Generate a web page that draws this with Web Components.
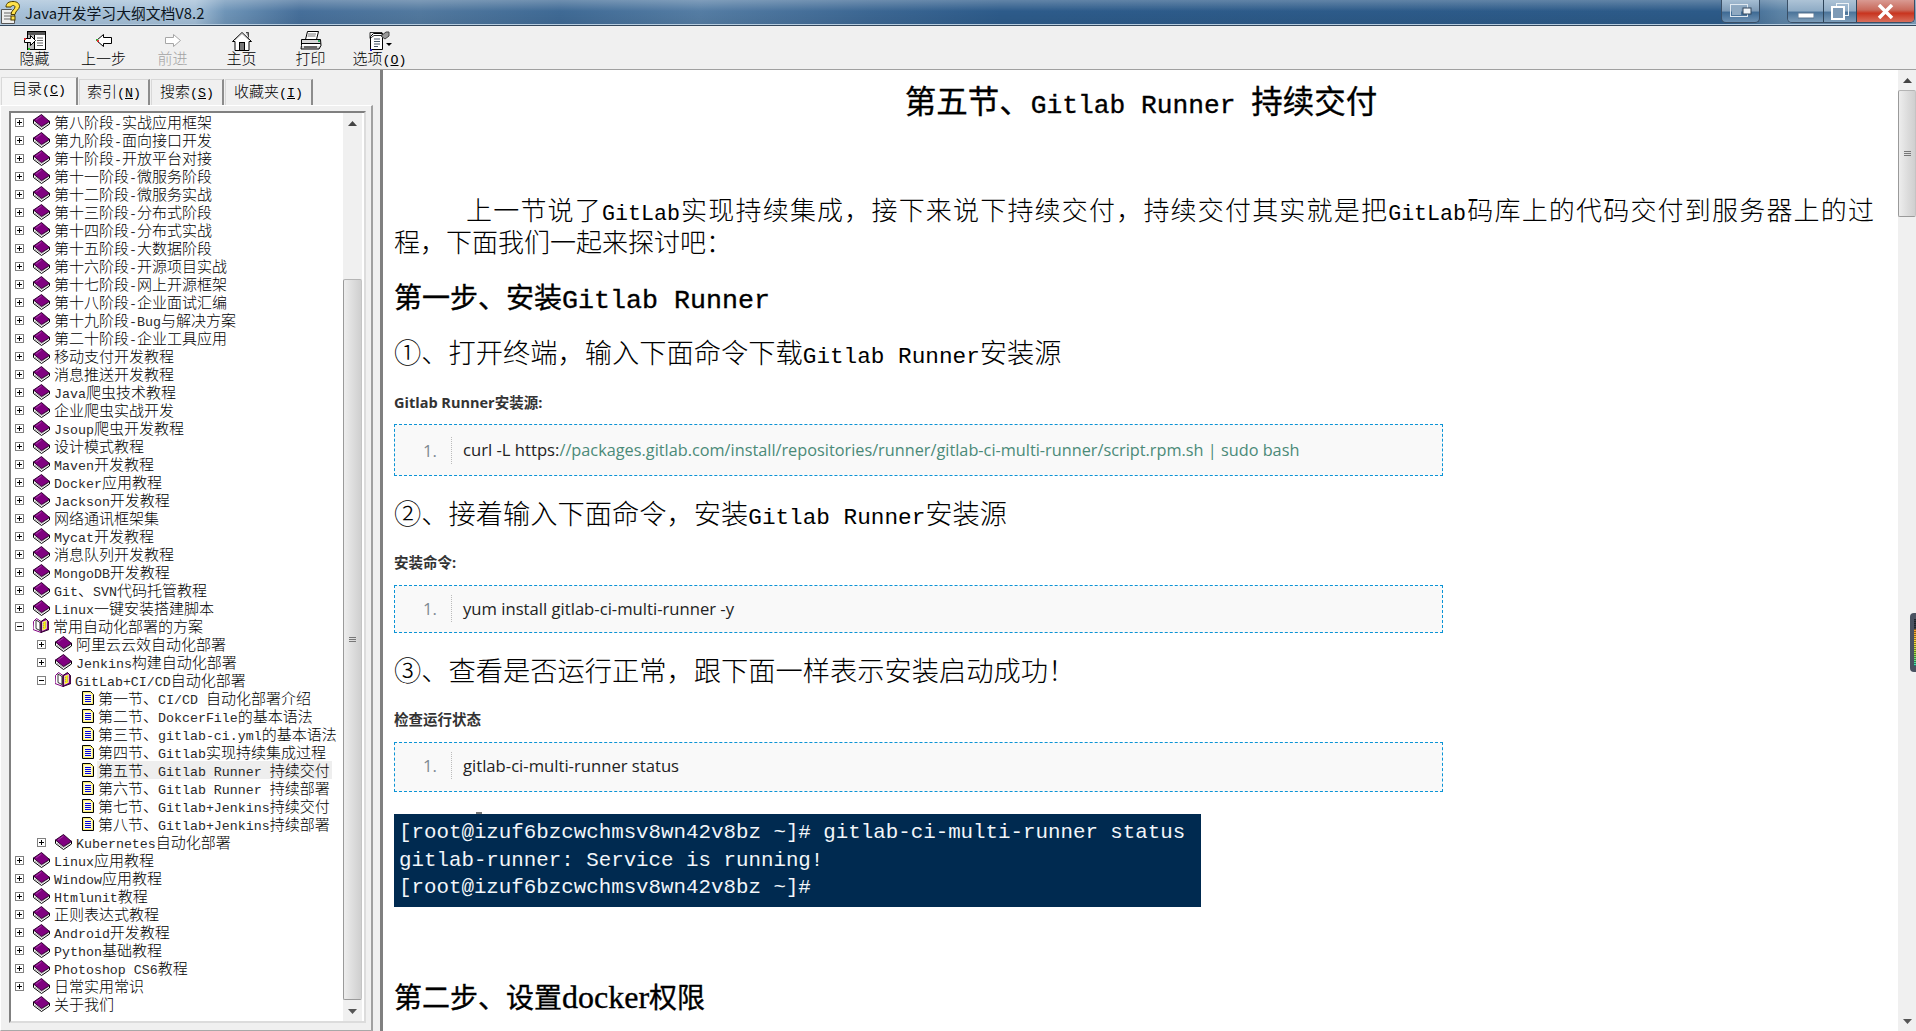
<!DOCTYPE html>
<html lang="zh">
<head>
<meta charset="utf-8">
<title>Java开发学习大纲文档V8.2</title>
<style>
  html, body { margin: 0; height: 100%; overflow: hidden; background: #f0f0f0; }
</style>
</head>
<body>
<help-window></help-window>
<script>
const CJK = '"Noto Sans CJK SC", sans-serif';

// latin runs get a mono font at half the CJK advance, like the bitmap font in the original
function esc(s) {
  return String(s).replace(/[&<>"]/g, m => ({ "&": "&amp;", "<": "&lt;", ">": "&gt;", '"': "&quot;" }[m]));
}
function mix(s) {
  return s.split(/([\x20-\x7e]+)/).map((part, i) => i % 2 ? `<span class="l">${esc(part)}</span>` : esc(part)).join("");
}
const MIX_CSS = `.l { font-family: "Liberation Mono", monospace; font-size: .833em; line-height: 0; }`;

const ICONS = {
  hide: `<svg width="22" height="20" viewBox="0 0 22 20"><rect x="3.500" y=".5" width="18" height="18" fill="#fff" stroke="#000"/><rect x="4" y="1" width="17" height="3" fill="#555"/><rect x="4" y="4" width="6" height="14" fill="#bdbdbd"/><path d="M10.500 4v14" stroke="#000"/><path d="M13 7h6M13 9.500h6M13 12h6M13 14.500h6" stroke="#666"/><path d="M.5 7.500h6v-3l5 5-5 5v-3h-6z" fill="#fff" stroke="#000"/><rect x="0" y="7" width="2" height="2" fill="#d33"/><rect x="4" y="17" width="2" height="2" fill="#2b2"/></svg>`,
  back: `<svg width="16" height="13" viewBox="0 0 16 13"><path d="M15.500 3.500h-8v-3l-7 6 7 6v-3h8z" fill="#fff" stroke="#000"/><rect x="0" y="5" width="2" height="2" fill="#3a3"/><rect x="1" y="6" width="2" height="2" fill="#d33"/></svg>`,
  forward: `<svg width="16" height="13" viewBox="0 0 16 13"><path d="M.5 3.500h8v-3l7 6-7 6v-3h-8z" fill="#fff" stroke="#a6a6a6"/></svg>`,
  home: `<svg width="20" height="20" viewBox="0 0 20 20"><path d="M14 1.500h2.500v5" fill="#888" stroke="#444"/><path d="M.5 10.500l9.500-9 9.500 9h-2.500v9h-14v-9z" fill="#fff" stroke="#000"/><path d="M3 9l7-6.500 7 6.500" fill="none" stroke="#999"/><rect x="7.500" y="11.500" width="5" height="8" fill="#777" stroke="#000"/></svg>`,
  print: `<svg width="22" height="19" viewBox="0 0 22 19"><path d="M7.500.5h11l-2 8h-11z" fill="#fff" stroke="#000"/><path d="M8 3h8M7.500 5h8" stroke="#777"/><path d="M1.500 8.500h19l.5 6-2 3.500h-18l.500-3.500z" fill="#d8d8d8" stroke="#000"/><path d="M1.500 12.500h19" stroke="#000"/><rect x="2" y="13" width="18" height="2" fill="#fff"/><rect x="4" y="15" width="13" height="2" fill="#666"/><rect x="18" y="9" width="2" height="2" fill="#3a6"/></svg>`,
  options: `<svg width="24" height="20" viewBox="0 0 24 20"><path d="M5.500 2.500h9v16h-12v-13z" fill="#fff" stroke="#000"/><path d="M2 1.500h12v3H6l-4 3z" fill="none" stroke="#000" opacity=".8"/><path d="M6 8h6M6 10.500h6M6 13h6M6 15.500h4" stroke="#456"/><path d="M13 5l5-4h3v4l-4 3z" fill="#999" stroke="#444"/><path d="M18 12h6l-3 3z" fill="#000"/><rect x="2" y="18" width="2" height="2" fill="#22c"/></svg>`,
  book: `<svg width="17" height="16" viewBox="0 0 17 16"><path d="M.5 6v3.500l8 6 8-5.500V7z" fill="#fff" stroke="#000"/><path d="M2 9l6.500 4.500 6.500-4.500" fill="none" stroke="#aaa"/><path d="M.5 6l8-5.500 8 7-8 5z" fill="#800080" stroke="#300030"/><path d="M3 6l5.500-4" stroke="#a838a8" fill="none"/></svg>`,
  open: `<svg width="16" height="16" viewBox="0 0 16 16"><path d="M.5 3.500l3-3 4.500 3v11l-8-3z" fill="#fff" stroke="#800080"/><path d="M15.500 3.500l-3-3-4.500 3v11l8-3z" fill="#800080" stroke="#2a002a"/><path d="M3 2l4 2.500v8l-4-2z" fill="#fff" stroke="#000" stroke-width=".8"/><path d="M9.500 4l4-1.500v8l-4 2z" fill="#fff200" stroke="#fff" stroke-width=".6"/><path d="M10.500 5v6M12.500 4.500v6" stroke="#999" stroke-dasharray="1 1"/></svg>`,
  doc: `<svg width="12" height="14" viewBox="0 0 12 14"><path d="M.5.5h8l3 3v10h-11z" fill="#fffbd0" stroke="#000"/><path d="M1.500 1.500h7v1h2v10h-9z" fill="none" stroke="#f0dc20" stroke-dasharray="1 1"/><path d="M3 4.500h6M3 6.500h6M3 8.500h6M3 10.500h6" stroke="#0000e0"/></svg>`,
  help: `<svg width="20" height="24" viewBox="0 0 20 24"><path d="M.5 8.500h10l3 3v11H.5z" fill="#eee" stroke="#555"/><path d="M3 12h7M3 15h7M3 18h7" stroke="#666"/><path d="M5 6c0-4 3-5.500 7-5.500s6.500 2 6.500 5-4 4-4.500 8h-4c0-4 4-5 4-7.500 0-2-3.500-2-4 0z" fill="#ffe24a" stroke="#4a3c00"/><rect x="10" y="15" width="4" height="4" fill="#ffe24a" stroke="#4a3c00"/></svg>`,
  grip: `<svg width="7" height="6" viewBox="0 0 7 6"><path d="M0 .5h7M0 2.500h7M0 4.500h7" stroke="#777"/></svg>`,
  up: `<svg width="9" height="5" viewBox="0 0 9 5"><path d="M4.500 0L9 5H0z" fill="#444"/></svg>`,
  down: `<svg width="9" height="5" viewBox="0 0 9 5"><path d="M0 0h9L4.500 5z" fill="#555"/></svg>`
};

class WinTitlebar extends HTMLElement {
  constructor() {
    super();
    this.attachShadow({ mode: "open" }).innerHTML = `
      <style>
        :host { display: flex; align-items: flex-start; height: 26px; box-sizing: border-box; position: relative;
          border-bottom: 1px solid #33475c;
          background:
            linear-gradient(180deg, rgba(255,255,255,.25), rgba(255,255,255,0) 45%, rgba(0,0,0,.06) 100%),
            linear-gradient(90deg, #a8c2d9 0, #a4bfd7 195px, #6f95b8 225px, #466f9a 300px, #52799f 420px, #3f6a95 560px, #557da4 700px, #3c6793 870px, #2d5b8a 1000px, #2c5a88 1720px, #5c83a6 1780px, #7fa0bd 1916px); }
        :host::after { content: ""; position: absolute; left: 0; right: 0; bottom: 0; height: 1px; background: #b7cde0; }
        .ic { margin: 1px 0 0 1px; flex: none; }
        .t { font: 14.800px/26px ${CJK}; color: #0c1520; margin-left: 4px; white-space: nowrap; }
        .snap { margin-left: auto; width: 39px; height: 23px; box-sizing: border-box; display: flex; align-items: center; justify-content: center;
          border: 1px solid #3a4f66; border-top: 0; border-radius: 0 0 5px 5px;
          background: linear-gradient(180deg, #a6bed3, #7d9ab6 50%, #3e6a94 55%, #6c90b2); }
        .ctl { display: flex; margin: 0 0 0 27px; height: 23px; box-sizing: border-box; border: 1px solid #3a4f66; border-top: 0; border-radius: 0 0 5px 5px; overflow: hidden; margin-right: 1px; }
        .ctl div { display: flex; align-items: center; justify-content: center; }
        .min, .max { background: linear-gradient(180deg, #adc3d6, #8eabc5 50%, #4a7399 55%, #7d9db9); border-right: 1px solid #2d4358; }
        .min { width: 35px; } .max { width: 32px; }
        .cls { width: 57px; background: linear-gradient(180deg, #d99a92, #c96a5c 45%, #c8341f 60%, #d86f5c); }
      </style>
      <span class="ic">${ICONS.help}</span>
      <span class="t">Java开发学习大纲文档V8.2</span>
      <div class="snap"><svg width="22" height="14" viewBox="0 0 22 14"><rect x=".5" y=".5" width="17" height="12" fill="none" stroke="#dfe8f0"/><rect x="2" y="2" width="9" height="9" fill="#8fa9c1"/><rect x="13" y="4" width="8" height="6" fill="#eef3f7" stroke="#33475c"/></svg></div>
      <div class="ctl">
        <div class="min"><svg width="16" height="16" viewBox="0 0 16 16"><rect x="0" y="10" width="16" height="5" fill="#fff" stroke="#5a7590"/></svg></div>
        <div class="max"><svg width="18" height="17" viewBox="0 0 18 17"><rect x="5.500" y=".5" width="12" height="12" fill="none" stroke="#eef3f7"/><rect x="1" y="4" width="12" height="12" fill="#7d9ab6" stroke="#fff" stroke-width="2"/></svg></div>
        <div class="cls"><svg width="17" height="15" viewBox="0 0 17 15"><path d="M2 1l13 13M15 1L2 14" stroke="#fff" stroke-width="3.500"/></svg></div>
      </div>`;
  }
}
customElements.define("win-titlebar", WinTitlebar);

class ToolButton extends HTMLElement {
  connectedCallback() {
    if (this.shadowRoot) return;
    const key = this.getAttribute("key");
    this.attachShadow({ mode: "open" }).innerHTML = `
      <style>
        :host { display: flex; flex-direction: column; align-items: center; width: 69px; color: ${this.hasAttribute("disabled") ? "#a3a3a3" : "#000"}; }
        .i { height: 21px; display: flex; align-items: center; justify-content: center; margin-top: 3px; }
        .n { font: 300 15px/18px ${CJK}; white-space: nowrap; margin-top: -2px; }
        ${MIX_CSS}
        .l { font-size: 13.300px; }
      </style>
      <div class="i">${ICONS[this.getAttribute("icon")]}</div>
      <div class="n">${esc(this.getAttribute("label"))}${key ? `<span class="l">(<u>${key}</u>)</span>` : ""}</div>`;
  }
}
customElements.define("tool-button", ToolButton);

class HelpToolbar extends HTMLElement {
  constructor() {
    super();
    this.attachShadow({ mode: "open" }).innerHTML = `
      <style>
        :host { display: flex; height: 44px; box-sizing: border-box; padding-top: 1px; background: #f0f0f0; border-bottom: 1px solid #a0a0a0; }
      </style>
      <tool-button icon="hide" label="隐藏"></tool-button>
      <tool-button icon="back" label="上一步"></tool-button>
      <tool-button icon="forward" label="前进" disabled></tool-button>
      <tool-button icon="home" label="主页"></tool-button>
      <tool-button icon="print" label="打印"></tool-button>
      <tool-button icon="options" label="选项" key="O"></tool-button>`;
  }
}
customElements.define("help-toolbar", HelpToolbar);

class ScrollBar extends HTMLElement {
  connectedCallback() {
    if (this.shadowRoot) return;
    const before = this.getAttribute("before"), size = this.getAttribute("size");
    this.attachShadow({ mode: "open" }).innerHTML = `
      <style>
        :host { display: flex; flex-direction: column; flex: none; background: #f0f0f0; }
        .a { flex: none; height: 20px; display: flex; align-items: center; justify-content: center; }
        .track { flex: 1; min-height: 0; padding-top: ${before}px; }
        .thumb { height: ${size}px; box-sizing: border-box; display: flex; align-items: center; justify-content: center;
          background: linear-gradient(90deg, #ededed, #dcdcdc 55%, #cfcfcf); border: 1px solid #9a9a9a; border-top-color: #b4b4b4; border-right-color: #c4c4c4; border-radius: 2px; }
      </style>
      <div class="a">${ICONS.up}</div>
      <div class="track"><div class="thumb">${ICONS.grip}</div></div>
      <div class="a">${ICONS.down}</div>`;
  }
}
customElements.define("scroll-bar", ScrollBar);

class TocTabs extends HTMLElement {
  constructor() {
    super();
    const tabs = [["目录", "C", 77], ["索引", "N", 71], ["搜索", "S", 73], ["收藏夹", "I", 88]];
    this.attachShadow({ mode: "open" }).innerHTML = `
      <style>
        :host { display: flex; align-items: flex-end; height: 35px; padding-left: 1px; box-sizing: border-box; gap: 1px; }
        .tab { box-sizing: border-box; height: 26px; font: 300 15px/21px ${CJK}; text-align: center; white-space: nowrap; color: #000;
          border: 1px solid #d8d8d8; border-bottom: 0; border-right: 2px solid #8c8c8c; background: #f0f0f0; }
        .tab.on { height: 28px; line-height: 20px; background: #f5f5f5; }
        ${MIX_CSS}
        .l { font-size: 13.300px; }
      </style>
      ${tabs.map(([n, k, w], i) => `<div class="tab${i ? "" : " on"}" style="width:${w}px">${n}<span class="l">(<u>${k}</u>)</span></div>`).join("")}`;
  }
}
customElements.define("toc-tabs", TocTabs);

class TocRow extends HTMLElement {
  connectedCallback() {
    if (this.shadowRoot) return;
    const level = +this.getAttribute("level") || 0;
    const kind = this.getAttribute("kind") || "book";
    const exp = this.getAttribute("exp") || "";
    const box = exp ? `<svg width="9" height="9" viewBox="0 0 9 9"><rect x=".5" y=".5" width="8" height="8" fill="#fff" stroke="#808080"/><path d="M2 4.500h5${exp === "+" ? "M4.500 2v5" : ""}" stroke="#000"/></svg>` : "";
    this.attachShadow({ mode: "open" }).innerHTML = `
      <style>
        :host { display: flex; align-items: center; height: 18px; white-space: pre; padding-left: ${level === 2 ? 71 : 4 + level * 22}px; }
        .x { width: 9px; height: 9px; margin-right: 9px; flex: none; display: flex; }
        .ic { flex: none; display: flex; margin-right: 3px; }
        .tx { font: 300 15px/18px ${CJK}; color: #000; padding: 0 2px 0 1px; }
        :host([sel]) .tx { background: #eeeeee; }
        ${MIX_CSS}
        .l { color: #2a2a2a; font-size: 13.300px; }
      </style>
      ${level === 2 ? "" : `<span class="x">${box}</span>`}
      <span class="ic">${ICONS[kind]}</span>
      <span class="tx">${mix(this.getAttribute("text"))}</span>`;
  }
}
customElements.define("toc-row", TocRow);

const TOC = [
  ..."第八阶段-实战应用框架|第九阶段-面向接口开发|第十阶段-开放平台对接|第十一阶段-微服务阶段|第十二阶段-微服务实战|第十三阶段-分布式阶段|第十四阶段-分布式实战|第十五阶段-大数据阶段|第十六阶段-开源项目实战|第十七阶段-网上开源框架|第十八阶段-企业面试汇编|第十九阶段-Bug与解决方案|第二十阶段-企业工具应用|移动支付开发教程|消息推送开发教程|Java爬虫技术教程|企业爬虫实战开发|Jsoup爬虫开发教程|设计模式教程|Maven开发教程|Docker应用教程|Jackson开发教程|网络通讯框架集|Mycat开发教程|消息队列开发教程|MongoDB开发教程|Git、SVN代码托管教程|Linux一键安装搭建脚本".split("|").map(text => ({ text, level: 0, exp: "+" })),
  { text: "常用自动化部署的方案", level: 0, exp: "-", kind: "open" },
  { text: "阿里云云效自动化部署", level: 1, exp: "+" },
  { text: "Jenkins构建自动化部署", level: 1, exp: "+" },
  { text: "GitLab+CI/CD自动化部署", level: 1, exp: "-", kind: "open" },
  { text: "第一节、CI/CD 自动化部署介绍", level: 2, kind: "doc" },
  { text: "第二节、DokcerFile的基本语法", level: 2, kind: "doc" },
  { text: "第三节、gitlab-ci.yml的基本语法", level: 2, kind: "doc" },
  { text: "第四节、Gitlab实现持续集成过程", level: 2, kind: "doc" },
  { text: "第五节、Gitlab Runner 持续交付", level: 2, kind: "doc", sel: true },
  { text: "第六节、Gitlab Runner 持续部署", level: 2, kind: "doc" },
  { text: "第七节、Gitlab+Jenkins持续交付", level: 2, kind: "doc" },
  { text: "第八节、Gitlab+Jenkins持续部署", level: 2, kind: "doc" },
  { text: "Kubernetes自动化部署", level: 1, exp: "+" },
  ..."Linux应用教程|Window应用教程|Htmlunit教程|正则表达式教程|Android开发教程|Python基础教程|Photoshop CS6教程|日常实用常识".split("|").map(text => ({ text, level: 0, exp: "+" })),
  { text: "关于我们", level: 0 }
];

class TocTree extends HTMLElement {
  constructor() {
    super();
    const rows = TOC.map(r => `<toc-row level="${r.level}" kind="${r.kind || "book"}" exp="${r.exp || ""}" text="${esc(r.text)}"${r.sel ? " sel" : ""}></toc-row>`).join("");
    this.attachShadow({ mode: "open" }).innerHTML = `
      <style>
        :host { display: flex; flex: 1; min-height: 0; background: #fff; border: 2px solid #808080; border-right-color: #dcdcdc; border-bottom-color: #dcdcdc; box-sizing: border-box; }
        .rows { flex: 1; min-width: 0; overflow: hidden; }
        scroll-bar { width: 19px; margin-right: 2px; }
      </style>
      <div class="rows">${rows}</div>
      <scroll-bar before="146" size="721"></scroll-bar>`;
  }
}
customElements.define("toc-tree", TocTree);

class TocPane extends HTMLElement {
  constructor() {
    super();
    this.attachShadow({ mode: "open" }).innerHTML = `
      <style>
        :host { display: flex; flex-direction: column; flex: none; width: 373px; box-sizing: border-box; background: #f0f0f0; }
        .panel { flex: 1; min-height: 0; display: flex; flex-direction: column; padding: 5px 5px 7px 8px;
          border: 1px solid #a8a8a8; border-top-color: #fff; border-left-color: #fff; border-right-width: 2px; border-right-color: #a0a0a0; }
      </style>
      <toc-tabs></toc-tabs>
      <div class="panel"><toc-tree></toc-tree></div>`;
  }
}
customElements.define("toc-pane", TocPane);

class CodeBox extends HTMLElement {
  constructor() {
    super();
    this.attachShadow({ mode: "open" }).innerHTML = `
      <style>
        :host { display: flex; align-items: center; width: 1049px; box-sizing: border-box; background: #f9f9f9; border: 1px dashed #0b94d6; padding-left: 28px;
          font: 16.650px/27px "Open Sans", sans-serif; color: #222; white-space: pre; }
        .n { width: 29px; flex: none; color: #7f8a93; box-sizing: border-box; border-right: 1px dotted #bbb; }
        .c { padding-left: 11px; }
        ::slotted(em) { font-style: normal; color: #4b8a78; font-size: 16.300px; }
      </style>
      <span class="n">1.</span><span class="c"><slot></slot></span>`;
  }
}
customElements.define("code-box", CodeBox);

// one line of the article: kind picks the size, text goes through mix()
class DocLine extends HTMLElement {
  connectedCallback() {
    if (this.shadowRoot) return;
    this.attachShadow({ mode: "open" }).innerHTML = `
      <style>
        :host { display: block; color: #000; font-family: ${CJK}; }
        .w { white-space: pre; }
        :host([kind="title"]) { font-size: 31.500px; line-height: 40px; font-weight: 400; text-align: center; -webkit-text-stroke: .35px #000; }
        :host([kind="step"]) { font-size: 28px; line-height: 40px; font-weight: 400; -webkit-text-stroke: .35px #000; }
        :host([kind="sub"]) { font-size: 27.250px; line-height: 36px; font-weight: 300; }
        :host([kind="label"]) { font: 700 14.500px/20px "Open Sans", ${CJK}; color: #333; }
        ${MIX_CSS}
        :host([kind="step"]) .l { font-size: 26.670px; }
        :host([kind="label"]) .l { font: inherit; line-height: 0; }
        :host([latin="serif"]) .l { font-family: "Liberation Serif", serif; font-size: 32px; }
      </style>
      <div class="w">${mix(this.getAttribute("text"))}</div>`;
  }
}
customElements.define("doc-line", DocLine);

class TermShot extends HTMLElement {
  constructor() {
    super();
    this.attachShadow({ mode: "open" }).innerHTML = `
      <style>
        :host { display: block; position: relative; width: 807px; height: 93px; box-sizing: border-box; padding: 5px 0 0 5px; background: #002a50; color: #f2f6fa;
          font: 20.800px/27.600px "Liberation Mono", monospace; }
        .w { white-space: pre; }
        .mark { position: absolute; left: 82px; top: -2px; width: 6px; height: 2px; background: #777; }
      </style>
      <span class="mark"></span>
      <div class="w"><slot></slot></div>`;
  }
}
customElements.define("term-shot", TermShot);

class DocView extends HTMLElement {
  constructor() {
    super();
    this.attachShadow({ mode: "open" }).innerHTML = `
      <style>
        :host { display: flex; flex: 1; min-width: 0; min-height: 0; background: #fff; border-left: 3px solid #808080; box-sizing: border-box; }
        .page { flex: 1; min-width: 0; overflow: hidden; padding: 9px 10px 0 11px; box-sizing: border-box; }
        .para { font: 300 26px/32px ${CJK}; margin-top: 74px; padding-right: 14px; color: #000; }
        .pl { display: block; white-space: pre; }
        .pl.first { padding-left: 72px; text-align: justify; text-align-last: justify; white-space: normal; }
        ${MIX_CSS}
        .step { margin-top: 19px; }
        .sub1 { margin-top: 17px; }
        .sub { margin-top: 18px; }
        .lab { margin-top: 24px; }
        .lab2 { margin-top: 23px; }
        code-box { margin-top: 12px; }
        .b1 { margin-top: 11px; height: 52px; }
        .b2 { height: 48px; padding-bottom: 2px; }
        .b3 { height: 50px; padding-bottom: 4px; }
        term-shot { margin-top: 22px; }
        .last { margin-top: 69px; }
        scroll-bar { width: 18px; }
      </style>
      <div class="page">
        <doc-line kind="title" text="第五节、Gitlab Runner 持续交付"></doc-line>
        <div class="para">
          <span class="pl first">${mix("上一节说了GitLab实现持续集成，接下来说下持续交付，持续交付其实就是把GitLab码库上的代码交付到服务器上的过")}</span>
          <span class="pl">${mix("程，下面我们一起来探讨吧：")}</span>
        </div>
        <doc-line class="step" kind="step" text="第一步、安装Gitlab Runner"></doc-line>
        <doc-line class="sub1" kind="sub" text="①、打开终端，输入下面命令下载Gitlab Runner安装源"></doc-line>
        <doc-line class="lab" kind="label" text="Gitlab Runner安装源:"></doc-line>
        <code-box class="b1">curl -L https:<em>//packages.gitlab.com/install/repositories/runner/gitlab-ci-multi-runner/script.rpm.sh | sudo bash</em></code-box>
        <doc-line class="sub" kind="sub" text="②、接着输入下面命令，安装Gitlab Runner安装源"></doc-line>
        <doc-line class="lab2" kind="label" text="安装命令:"></doc-line>
        <code-box class="b2">yum install gitlab-ci-multi-runner -y</code-box>
        <doc-line class="sub" kind="sub" text="③、查看是否运行正常，跟下面一样表示安装启动成功！"></doc-line>
        <doc-line class="lab2" kind="label" text="检查运行状态"></doc-line>
        <code-box class="b3">gitlab-ci-multi-runner status</code-box>
        <term-shot>[root@izuf6bzcwchmsv8wn42v8bz ~]# gitlab-ci-multi-runner status
gitlab-runner: Service is running!
[root@izuf6bzcwchmsv8wn42v8bz ~]#</term-shot>
        <doc-line class="last" kind="step" latin="serif" text="第二步、设置docker权限"></doc-line>
      </div>
      <scroll-bar before="0" size="127"></scroll-bar>`;
  }
}
customElements.define("doc-view", DocView);

class HelpWindow extends HTMLElement {
  constructor() {
    super();
    this.attachShadow({ mode: "open" }).innerHTML = `
      <style>
        :host { display: flex; flex-direction: column; height: 100vh; position: relative; overflow: hidden; }
        .main { flex: 1; min-height: 0; display: flex; }
        .split { width: 7px; flex: none; background: #f0f0f0; }
        /* floating desktop widget that peeks in over the right edge */
        .widget { position: absolute; right: 0; top: 613px; width: 6px; height: 59px; border-radius: 4px 0 0 4px; background: #4a5260; overflow: hidden; }
        .widget i { position: absolute; left: 4px; top: 6px; width: 2px; height: 47px;
          background: repeating-linear-gradient(180deg, rgba(0,0,0,.45) 0 1px, transparent 1px 2px), linear-gradient(180deg, #333a46 0 22%, #f2992e 22%, #f8dc3a 50%, #9be04a 75%, #37e0c0 100%); }
      </style>
      <win-titlebar></win-titlebar>
      <help-toolbar></help-toolbar>
      <div class="main">
        <toc-pane></toc-pane>
        <div class="split"></div>
        <doc-view></doc-view>
      </div>
      <div class="widget"><i></i></div>`;
  }
}
customElements.define("help-window", HelpWindow);
</script>
</body>
</html>
